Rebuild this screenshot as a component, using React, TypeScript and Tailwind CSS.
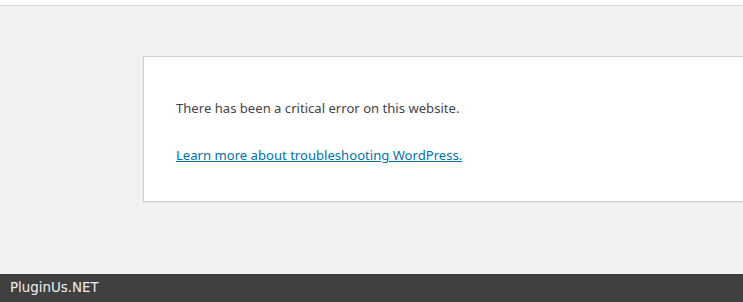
export default function App() {
  return (
    <div className="flex h-[302px] w-[743px] flex-col overflow-hidden bg-[#f1f1f1]">
      <div className="h-[6px] shrink-0 border-b border-[#dcdcdc] bg-white" />
      <div className="flex-1 overflow-hidden">
        <div className="ml-[143px] mt-[50px] w-[700px] border border-[#ccd0d4] bg-white pb-[35px] pl-[32px] pt-[41px] shadow-[0_1px_1px_rgba(0,0,0,0.04)] [font-family:'Noto_Sans',sans-serif]">
          <p className="text-[13.1px] leading-[21px] text-[#444]">There has been a critical error on this website.</p>
          <p className="mt-[26px] text-[13.1px] leading-[21px]">
            <a href="#" className="text-[#0073aa] underline">Learn more about troubleshooting WordPress.</a>
          </p>
        </div>
      </div>
      <div className="flex h-[28px] shrink-0 items-center bg-[#404040] pl-[10px] text-[13.4px] text-[#f0f0f0] [font-family:'DejaVu_Sans',sans-serif]">
        PluginUs.NET
      </div>
    </div>
  );
}
